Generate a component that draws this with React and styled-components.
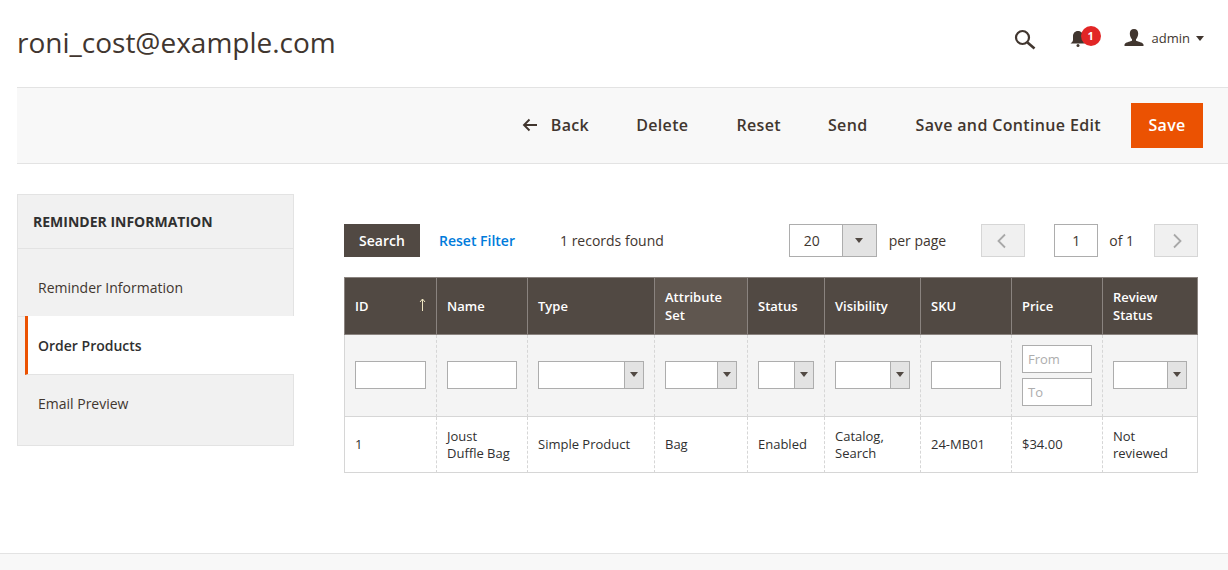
import React from "react";
import styled, { createGlobalStyle } from "styled-components";

const Global = createGlobalStyle`
  html, body { margin: 0; padding: 0; height: 570px; overflow: hidden; background: #fff; }
  body { font-family: "Open Sans", "Liberation Sans", sans-serif; color: #41362f; }
  * { box-sizing: border-box; }
`;

const Page = styled.div`
  height: 570px;
  display: flex;
  flex-direction: column;
`;
const TopBar = styled.header`
  height: 87px;
  padding: 0 24px 0 17px;
  display: flex;
  align-items: flex-start;
  justify-content: space-between;
`;
const PageTitle = styled.h1`
  margin: 23px 0 0;
  font-size: 28px;
  line-height: 38px;
  font-weight: 400;
  color: #41362f;
`;
const TopActions = styled.div`
  display: flex;
  align-items: center;
  margin-top: 26px;
  height: 24px;
`;
const IconSlot = styled.div`
  position: relative;
  display: flex;
  margin-right: ${(p) => p.$gap}px;
`;
const Badge = styled.span`
  position: absolute;
  left: 12px;
  top: 0;
  width: 20px;
  height: 20px;
  border-radius: 50%;
  background: #e22626;
  color: #fff;
  font-size: 11px;
  font-weight: 700;
  line-height: 20px;
  text-align: center;
`;
const UserName = styled.span`
  font-size: 13px;
  margin-left: 8px;
  color: #41362f;
`;
const Caret = styled.span`
  width: 0;
  height: 0;
  border-left: 4px solid transparent;
  border-right: 4px solid transparent;
  border-top: 5px solid ${(p) => p.$color || "#41362f"};
  display: inline-block;
`;
const UserCaret = styled(Caret)`
  margin-left: 6px;
`;

const ActionBar = styled.div`
  height: 77px;
  margin-left: 17px;
  padding: 15px 25px 0 0;
  background: #f8f8f8;
  border-top: 1px solid #e3e3e3;
  border-bottom: 1px solid #e3e3e3;
  display: flex;
  justify-content: flex-end;
  align-items: flex-start;
`;
const ActionButton = styled.button`
  height: 45px;
  border: 0;
  padding: 0 0 2px;
  background: transparent;
  font-family: inherit;
  font-size: 16px;
  font-weight: 600;
  letter-spacing: 0.35px;
  color: #41362f;
  display: flex;
  align-items: center;
  margin-left: ${(p) => p.$ml}px;
`;
const BackArrow = styled.svg`
  margin-right: 13px;
`;
const SaveButton = styled(ActionButton)`
  width: 72px;
  justify-content: center;
  background: #eb5202;
  color: #fff;
`;

const Main = styled.main`
  flex: 1;
  display: flex;
  align-items: flex-start;
  padding: 30px 30px 0 17px;
`;
const Side = styled.aside`
  width: 277px;
  height: 252px;
  flex: none;
  background: #f1f1f1;
  border: 1px solid #e3e3e3;
  display: flex;
  flex-direction: column;
`;
const SideTitle = styled.div`
  height: 54px;
  padding-left: 15px;
  display: flex;
  align-items: center;
  font-size: 14px;
  font-weight: 700;
  color: #303030;
  border-bottom: 1px solid #e3e3e3;
`;
const SideItem = styled.div`
  display: flex;
  align-items: center;
  font-size: 14px;
  height: ${(p) => p.$h}px;
  padding: ${(p) => p.$pt || 0}px 0 ${(p) => p.$pb || 0}px ${(p) => (p.$active ? 10 : 20)}px;
  color: ${(p) => (p.$active ? "#303030" : "#41362f")};
  font-weight: ${(p) => (p.$active ? 600 : 400)};
  background: ${(p) => (p.$active ? "#fff" : "transparent")};
  margin: ${(p) => (p.$active ? "-1px -1px 0 7px" : "0")};
  border-left: ${(p) => (p.$active ? "3px solid #eb5202" : "0")};
  border-bottom: ${(p) => (p.$last ? "0" : "1px solid #e3e3e3")};
`;

const Content = styled.section`
  width: 854px;
  margin-left: 50px;
  padding-top: 30px;
`;
const Toolbar = styled.div`
  display: flex;
  align-items: center;
  height: 33px;
  font-size: 14px;
  margin-bottom: 20px;
`;
const SearchBtn = styled.button`
  width: 76px;
  height: 33px;
  border: 0;
  background: #514943;
  color: #fff;
  font-family: inherit;
  font-size: 14px;
  font-weight: 600;
`;
const ResetLink = styled.a`
  margin-left: 19px;
  color: #007bdb;
  font-weight: 600;
  font-size: 14px;
`;
const Found = styled.span`
  margin-left: 45px;
`;
const PerPage = styled.div`
  margin-left: auto;
  width: 88px;
  height: 33px;
  display: flex;
  border: 1px solid #adadad;
  background: #fff;
`;
const PerValue = styled.span`
  flex: 1;
  padding-left: 14px;
  line-height: 31px;
`;
const SelectArrow = styled.span`
  width: ${(p) => p.$w}px;
  flex: none;
  display: flex;
  align-items: center;
  justify-content: center;
  background: #e3e3e3;
  border-left: 1px solid #adadad;
`;
const TextLabel = styled.span`
  margin-left: ${(p) => p.$ml}px;
`;
const PagerBtn = styled.button`
  width: 44px;
  height: 33px;
  padding: 0;
  background: #f0f0f0;
  border: 1px solid #d6d6d6;
  margin-left: ${(p) => p.$ml}px;
  display: flex;
  align-items: center;
  justify-content: center;
`;
const PageInput = styled.div`
  width: 44px;
  height: 33px;
  margin-left: 29px;
  border: 1px solid #adadad;
  text-align: center;
  line-height: 31px;
`;

const Grid = styled.table`
  width: 854px;
  table-layout: fixed;
  border-collapse: separate;
  border-spacing: 0;
  font-size: 13px;
  color: #303030;
`;
const Th = styled.th`
  height: 58px;
  padding: 0 10px;
  text-align: left;
  vertical-align: middle;
  position: relative;
  background: ${(p) => (p.$hover ? "#5f564f" : "#514943")};
  color: #fff;
  font-weight: 600;
  font-size: 13px;
  line-height: 18px;
  border-top: 1px solid #8a837f;
  border-bottom: 1px solid #8a837f;
  border-left: 1px solid #8a837f;
  &:last-child { border-right: 1px solid #8a837f; }
`;
const SortArrow = styled.svg`
  position: absolute;
  right: 10px;
  top: 20px;
`;
const FilterTd = styled.td`
  height: 82px;
  padding: 0 10px;
  background: #f4f4f4;
  vertical-align: middle;
  border-left: 1px dashed #d6d6d6;
  border-bottom: 1px solid #d6d6d6;
  &:first-child { border-left: 1px solid #d6d6d6; }
  &:last-child { border-right: 1px solid #d6d6d6; }
`;
const BodyTd = styled.td`
  height: 56px;
  padding: 0 10px;
  vertical-align: middle;
  line-height: 17px;
  border-left: 1px dashed #d6d6d6;
  border-bottom: 1px solid #d6d6d6;
  &:first-child { border-left: 1px solid #d6d6d6; }
  &:last-child { border-right: 1px solid #d6d6d6; }
`;
const FilterInput = styled.div`
  height: 28px;
  background: #fff;
  border: 1px solid #adadad;
  padding-left: 5px;
  margin-bottom: ${(p) => (p.$single ? 2 : 0)}px;
  font-size: 13px;
  line-height: 26px;
  color: #adadad;
  & + & { margin-top: 5px; }
`;
const FilterSelect = styled.div`
  height: 28px;
  margin-bottom: 2px;
  display: flex;
  background: #fff;
  border: 1px solid #adadad;
`;
const SelectBlank = styled.span`
  flex: 1;
`;
const Footer = styled.footer`
  margin-top: auto;
  height: 17px;
  flex: none;
  background: #f8f8f8;
  border-top: 1px solid #e3e3e3;
`;

const cols = [92, 91, 127, 93, 77, 96, 91, 91, 96];
const headers = ["ID", "Name", "Type", "Attribute Set", "Status", "Visibility", "SKU", "Price", "Review Status"];
const row = ["1", "Joust Duffle Bag", "Simple Product", "Bag", "Enabled", "Catalog, Search", "24-MB01", "$34.00", "Not reviewed"];

const SelectBox = () => (
  <FilterSelect>
    <SelectBlank />
    <SelectArrow $w={19}><Caret $color="#514943" /></SelectArrow>
  </FilterSelect>
);

const Chevron = ({ left }) => (
  <svg width="12" height="16" viewBox="0 0 12 16" fill="none" stroke="#a8a8a8" strokeWidth="1.800">
    <path d={left ? "M8 1.500 1.500 8 8 14.500" : "M4 1.500 10.500 8 4 14.500"} />
  </svg>
);

export default function App() {
  return (
    <Page>
      <Global />
      <TopBar>
        <PageTitle>roni_cost@example.com</PageTitle>
        <TopActions>
          <IconSlot $gap={31}>
            <svg width="24" height="24" viewBox="0 0 24 24" fill="none" stroke="#41362f">
              <circle cx="8.500" cy="11.500" r="6.500" strokeWidth="2.200" />
              <path d="m13.500 16.500 7 6" strokeWidth="2.600" />
            </svg>
          </IconSlot>
          <IconSlot $gap={35}>
            <svg width="20" height="24" viewBox="0 0 20 24" fill="#41362f">
              <path d="M9 5c3.300 0 5 2.400 5 5.500v3.500c0 1.500.9 2.500 2 3.500H1.500C2.700 16.500 4 15.500 4 14v-3.500C4 7.400 5.700 5 9 5Z" />
              <circle cx="9" cy="19.500" r="1.500" />
            </svg>
            <Badge>1</Badge>
          </IconSlot>
          <svg width="20" height="22" viewBox="0 0 20 22" fill="#41362f">
            <path d="M10 2c2.800 0 4.200 1.900 4.200 4.500 0 2.300-1 4.700-2.200 5.700v1.600c2.400 1 6.500 1.500 7.500 3.700v1.500H.5v-1.500c1-2.200 5.100-2.700 7.500-3.700v-1.600C6.800 11.200 5.800 8.800 5.800 6.500 5.800 3.900 7.200 2 10 2Z" />
          </svg>
          <UserName>admin</UserName>
          <UserCaret />
        </TopActions>
      </TopBar>

      <ActionBar>
        <ActionButton $ml={0}>
          <BackArrow width="16" height="14" viewBox="0 0 16 14" fill="none" stroke="#41362f" strokeWidth="1.900">
            <path d="M15 7H2M7.500 1.500 2 7l5.500 5.500" />
          </BackArrow>
          Back
        </ActionButton>
        <ActionButton $ml={47}>Delete</ActionButton>
        <ActionButton $ml={48}>Reset</ActionButton>
        <ActionButton $ml={47}>Send</ActionButton>
        <ActionButton $ml={48}>Save and Continue Edit</ActionButton>
        <SaveButton $ml={30}>Save</SaveButton>
      </ActionBar>

      <Main>
        <Side>
          <SideTitle>REMINDER INFORMATION</SideTitle>
          <SideItem $h={68} $pt={9}>Reminder Information</SideItem>
          <SideItem $h={59} $active>Order Products</SideItem>
          <SideItem $h={58} $pb={2} $last>Email Preview</SideItem>
        </Side>
        <Content>
          <Toolbar>
            <SearchBtn>Search</SearchBtn>
            <ResetLink>Reset Filter</ResetLink>
            <Found>1 records found</Found>
            <PerPage>
              <PerValue>20</PerValue>
              <SelectArrow $w={34}><Caret $color="#514943" /></SelectArrow>
            </PerPage>
            <TextLabel $ml={12}>per page</TextLabel>
            <PagerBtn $ml={35}><Chevron left /></PagerBtn>
            <PageInput>1</PageInput>
            <TextLabel $ml={11}>of 1</TextLabel>
            <PagerBtn $ml={20}><Chevron /></PagerBtn>
          </Toolbar>
          <Grid>
            <colgroup>
              {cols.map((w, i) => <col key={i} style={{ width: w }} />)}
            </colgroup>
            <thead>
              <tr>
                {headers.map((h, i) => (
                  <Th key={h} $hover={i === 3}>
                    {h}
                    {i === 0 && (
                      <SortArrow width="7" height="13" viewBox="0 0 7 13" fill="none" stroke="#efe6c2" strokeWidth="1">
                        <path d="M3.500 13V1M1 4l2.500-3L6 4" />
                      </SortArrow>
                    )}
                  </Th>
                ))}
              </tr>
            </thead>
            <tbody>
              <tr>
                <FilterTd><FilterInput $single /></FilterTd>
                <FilterTd><FilterInput $single /></FilterTd>
                <FilterTd><SelectBox /></FilterTd>
                <FilterTd><SelectBox /></FilterTd>
                <FilterTd><SelectBox /></FilterTd>
                <FilterTd><SelectBox /></FilterTd>
                <FilterTd><FilterInput $single /></FilterTd>
                <FilterTd>
                  <FilterInput>From</FilterInput>
                  <FilterInput>To</FilterInput>
                </FilterTd>
                <FilterTd><SelectBox /></FilterTd>
              </tr>
              <tr>
                {row.map((c, i) => <BodyTd key={i}>{c}</BodyTd>)}
              </tr>
            </tbody>
          </Grid>
        </Content>
      </Main>
      <Footer />
    </Page>
  );
}
